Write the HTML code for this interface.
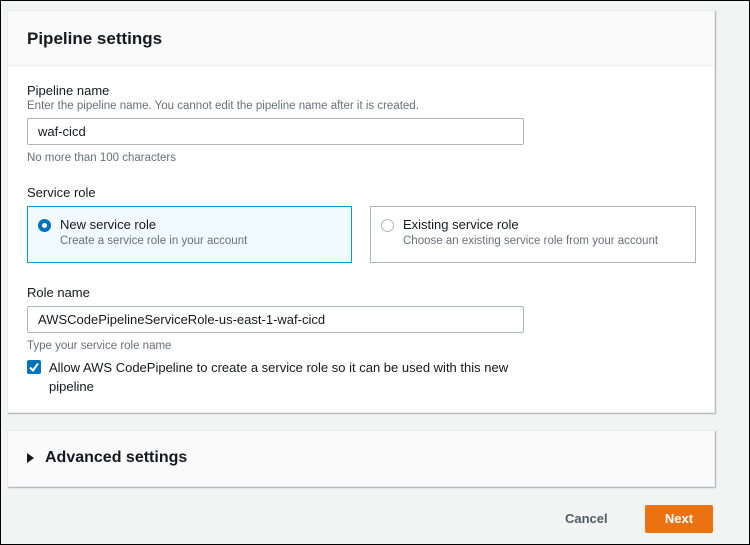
<!DOCTYPE html>
<html><head><style>
*{box-sizing:border-box;margin:0;padding:0}
body{width:750px;height:545px;overflow:hidden;background:#f2f3f3;font-family:"Liberation Sans",sans-serif;color:#16191f;position:relative}
.frame{position:absolute;left:0;top:0;width:750px;height:545px;border:1px solid #000}
.panel{position:absolute;left:7px;width:708px;background:#fff;border:1px solid #eaeded;box-shadow:1px 1px 1px rgba(0,28,36,.3)}
.hdr{background:#fafafa;border-bottom:1px solid #eaeded;height:55px;padding:18px 19px;font-size:17px;font-weight:bold}
.abs{position:absolute}
.lbl{font-size:13px;color:#16191f}
.desc{font-size:11.5px;color:#687078}
.input{position:absolute;border:1px solid #aab7b8;border-radius:2px;height:27px;padding:5px 10px;font-size:13px;background:#fff}
.tile{position:absolute;height:57px;border:1px solid #aab7b8;padding:10px 0 0 32px}
.tile .t{font-size:13px}
.tile .d{font-size:11.5px;color:#687078;margin-top:3px}
.radio{position:absolute;left:10px;top:12px;width:13px;height:13px;border-radius:50%}
</style></head><body>
<div class="frame"></div>
<div class="panel" style="top:10px;height:403px">
 <div class="hdr">Pipeline settings</div>
 <div class="abs lbl" style="left:19px;top:72px">Pipeline name</div>
 <div class="abs desc" style="left:19px;top:89px">Enter the pipeline name. You cannot edit the pipeline name after it is created.</div>
 <div class="input" style="left:19px;top:107px;width:497px">waf-cicd</div>
 <div class="abs desc" style="left:19px;top:141px">No more than 100 characters</div>
 <div class="abs lbl" style="left:19px;top:174px">Service role</div>
 <div class="tile" style="left:19px;top:195px;width:325px;background:#f1faff;border-color:#00a1c9"><div class="radio" style="border:4px solid #0073bb;background:#fff"></div><div class="t">New service role</div><div class="d">Create a service role in your account</div></div>
 <div class="tile" style="left:362px;top:195px;width:326px"><div class="radio" style="border:1px solid #aab7b8"></div><div class="t">Existing service role</div><div class="d">Choose an existing service role from your account</div></div>
 <div class="abs lbl" style="left:19px;top:274px">Role name</div>
 <div class="input" style="left:19px;top:295px;width:497px">AWSCodePipelineServiceRole-us-east-1-waf-cicd</div>
 <div class="abs desc" style="left:19px;top:329px">Type your service role name</div>
 <div class="abs" style="left:19px;top:349px;width:14px;height:14px;background:#0073bb;border-radius:2px"><svg width="14" height="14"><path d="M3 7.5l3 3 5-7" stroke="#fff" stroke-width="2" fill="none"/></svg></div>
 <div class="abs lbl" style="left:41px;top:347px;width:480px;line-height:19px">Allow AWS CodePipeline to create a service role so it can be used with this new pipeline</div>
</div>
<div class="panel" style="top:430px;height:57px;background:#fafafa">
 <div class="abs" style="left:19px;top:22px;width:0;height:0;border-left:7px solid #16191f;border-top:5px solid transparent;border-bottom:5px solid transparent"></div>
 <div class="abs" style="left:37px;top:18px;font-size:16px;font-weight:bold">Advanced settings</div>
</div>
<div class="abs" style="left:565px;top:511px;font-size:13px;font-weight:bold;color:#545b64">Cancel</div>
<div class="abs" style="left:645px;top:505px;width:68px;height:28px;background:#ec7211;border-radius:2px;color:#fff;font-size:13px;font-weight:bold;text-align:center;line-height:28px">Next</div>
</body></html>
